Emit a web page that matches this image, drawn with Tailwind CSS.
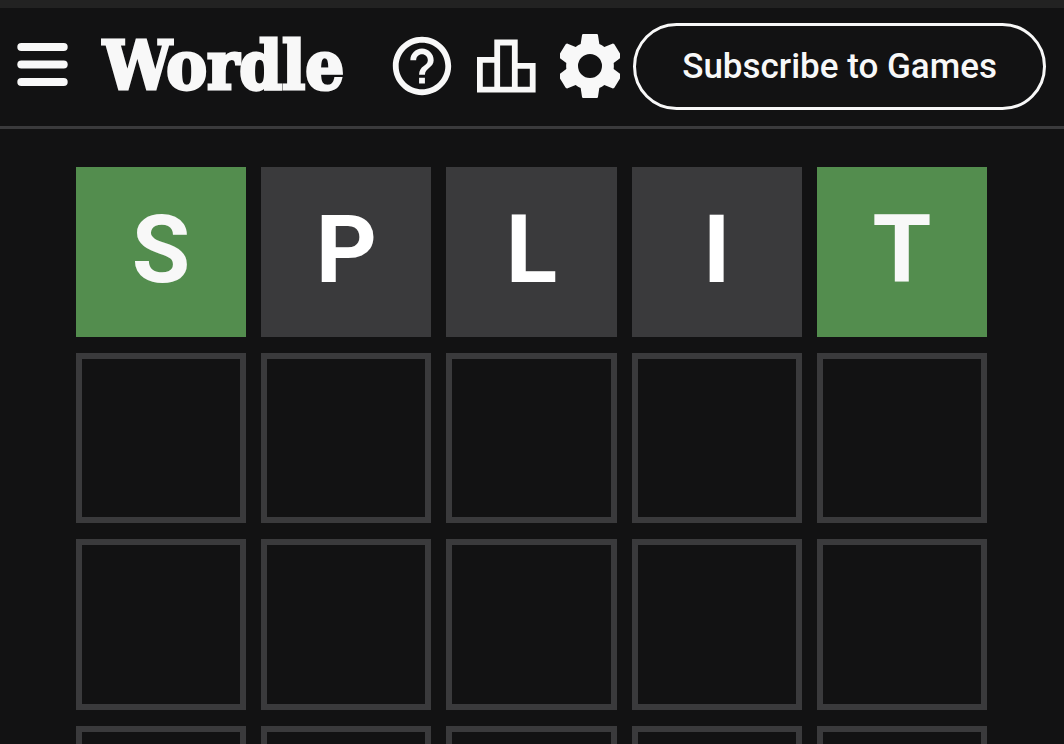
<!DOCTYPE html>
<html lang="en">
<head>
  <meta charset="UTF-8">
  <meta name="viewport" content="width=device-width, initial-scale=1.0">
  <title>Wordle</title>
  <script src="https://cdn.jsdelivr.net/npm/@tailwindcss/browser@4"></script>
</head>
<body class="bg-[#121213] text-[#f8f8f8] font-['Roboto',sans-serif] border-t-8 border-[#222222] h-screen overflow-hidden">
  <header class="flex items-center pt-[15px] pb-4 pl-[17px] pr-[18px] border-b-3 border-[#3a3a3c]">
    <button aria-label="Menu" class="shrink-0 pb-1">
      <svg class="w-[51px] h-[44px]" viewBox="0 0 51 44" fill="currentColor">
        <rect x="0.3" y="0" width="50.4" height="8" rx="4"/>
        <rect x="0.3" y="17.5" width="50.4" height="8" rx="4"/>
        <rect x="0.3" y="35" width="50.4" height="8" rx="4"/>
      </svg>
    </button>
    <h1 class="ml-[35px] pb-1 text-[68px] leading-[80px] font-bold font-['DejaVu_Serif_Condensed','DejaVu_Serif',serif] [-webkit-text-stroke:3px_#f8f8f8]">Wordle</h1>

    <div class="ml-auto flex items-center gap-6 pb-0.5">
      <button aria-label="Help" class="w-[60px] flex justify-center">
        <svg class="size-[70px] shrink-0" viewBox="0 0 24 24" fill="currentColor">
          <path d="M11 18h2v-2h-2v2zm1-16C6.48 2 2 6.48 2 12s4.48 10 10 10 10-4.48 10-10S17.52 2 12 2zm0 18c-4.41 0-8-3.59-8-8s3.59-8 8-8 8 3.59 8 8-3.59 8-8 8zm0-14c-2.21 0-4 1.79-4 4h2c0-1.1.9-2 2-2s2 .9 2 2c0 2-3 1.75-3 5h2c0-2.25 3-2.5 3-5 0-2.21-1.79-4-4-4z"/>
        </svg>
      </button>
      <button aria-label="Statistics" class="w-[60px] flex justify-center">
        <svg class="w-[60px] h-[54px]" viewBox="0 0 60 54" fill="none" stroke="currentColor" stroke-width="5.8">
          <path d="M21.2 50.7V3.5h17.6v47.2M21.2 20.9H3.9v29.8h52.8V26.8H38.8"/>
        </svg>
      </button>
      <button aria-label="Settings">
        <svg class="w-[60px] h-16" viewBox="-90 -96 180 192">
          <path fill="currentColor" fill-rule="evenodd" d="M-20-96H20Q24-96 24-92L28-66Q36-63 43-57L67-67Q70-68 73-65L94-31Q95-27 92-25L71-9Q72 0 71 9L92 25Q95 27 94 31L73 65Q70 68 67 67L43 57Q36 63 28 66L24 92Q24 96 20 96H-20Q-24 96-24 92L-28 66Q-36 63-43 57L-67 67Q-70 68-73 65L-94 31Q-95 27-92 25L-71 9Q-72 0-71-9L-92-25Q-95-27-94-31L-73-65Q-70-68-67-67L-43-57Q-36-63-28-66L-24-92Q-24-96-20-96ZM0-36A36 36 0 1 0 0 36A36 36 0 1 0 0-36Z"/>
        </svg>
      </button>
    </div>
    <button class="ml-[13px] px-[46px] h-[87px] rounded-full border-3 border-[#f8f8f8] text-[35px] leading-[40px] font-medium whitespace-nowrap">Subscribe to Games</button>
  </header>

  <main class="pl-[76px] pr-[77px] pt-[38px]">
    <div class="grid grid-cols-5 gap-x-[15px] gap-y-4 text-[95px] leading-none font-bold">
      <div class="aspect-square flex items-center justify-center pb-1.5 bg-[#538d4e]">S</div>
      <div class="aspect-square flex items-center justify-center pb-1.5 bg-[#3a3a3c] text-white">P</div>
      <div class="aspect-square flex items-center justify-center pb-1.5 bg-[#3a3a3c] text-white">L</div>
      <div class="aspect-square flex items-center justify-center pb-1.5 bg-[#3a3a3c] text-white">I</div>
      <div class="aspect-square flex items-center justify-center pb-1.5 bg-[#538d4e]">T</div>

      <div class="aspect-square border-6 border-[#3a3a3c]"></div>
      <div class="aspect-square border-6 border-[#3a3a3c]"></div>
      <div class="aspect-square border-6 border-[#3a3a3c]"></div>
      <div class="aspect-square border-6 border-[#3a3a3c]"></div>
      <div class="aspect-square border-6 border-[#3a3a3c]"></div>

      <div class="aspect-square border-6 border-[#3a3a3c]"></div>
      <div class="aspect-square border-6 border-[#3a3a3c]"></div>
      <div class="aspect-square border-6 border-[#3a3a3c]"></div>
      <div class="aspect-square border-6 border-[#3a3a3c]"></div>
      <div class="aspect-square border-6 border-[#3a3a3c]"></div>

      <div class="aspect-square border-6 border-[#3a3a3c]"></div>
      <div class="aspect-square border-6 border-[#3a3a3c]"></div>
      <div class="aspect-square border-6 border-[#3a3a3c]"></div>
      <div class="aspect-square border-6 border-[#3a3a3c]"></div>
      <div class="aspect-square border-6 border-[#3a3a3c]"></div>
    </div>
  </main>
</body>
</html>
